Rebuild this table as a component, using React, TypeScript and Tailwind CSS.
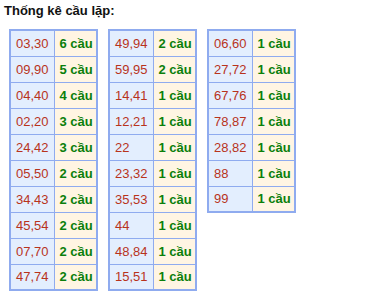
const cols: [string, number][][] = [
  [
    ["03,30", 6],
    ["09,90", 5],
    ["04,40", 4],
    ["02,20", 3],
    ["24,42", 3],
    ["05,50", 2],
    ["34,43", 2],
    ["45,54", 2],
    ["07,70", 2],
    ["47,74", 2],
  ],
  [
    ["49,94", 2],
    ["59,95", 2],
    ["14,41", 1],
    ["12,21", 1],
    ["22", 1],
    ["23,32", 1],
    ["35,53", 1],
    ["44", 1],
    ["48,84", 1],
    ["15,51", 1],
  ],
  [
    ["06,60", 1],
    ["27,72", 1],
    ["67,76", 1],
    ["78,87", 1],
    ["28,82", 1],
    ["88", 1],
    ["99", 1],
  ],
]

export default function App() {
  return (
    <div className="bg-white w-[365px] h-[301px] px-[4px] pt-[3px] font-['Liberation_Sans',Arial,sans-serif]">
      <div className="text-[13px] leading-[15px] font-bold text-[#111]">Thống kê cầu lặp:</div>
      <div className="flex items-start gap-[10px] mt-[11px] ml-[5px]">
        {cols.map((rows, i) => (
          <table key={i} className="border-collapse border-2 border-[#8fabef] text-[13px]">
            <tbody>
              {rows.map(([pair, n]) => (
                <tr key={pair} className="h-[26px]">
                  <td className="w-[44px] border border-[#8fabef] bg-[#e3eefe] pl-[5px] text-[#b8331c] leading-[15px]">
                    {pair}
                  </td>
                  <td className="w-[43px] border border-[#8fabef] bg-[#fff5e3] pl-[5px] font-bold text-[#0b7f0b] leading-[15px]">
                    {n} cầu
                  </td>
                </tr>
              ))}
            </tbody>
          </table>
        ))}
      </div>
    </div>
  )
}
